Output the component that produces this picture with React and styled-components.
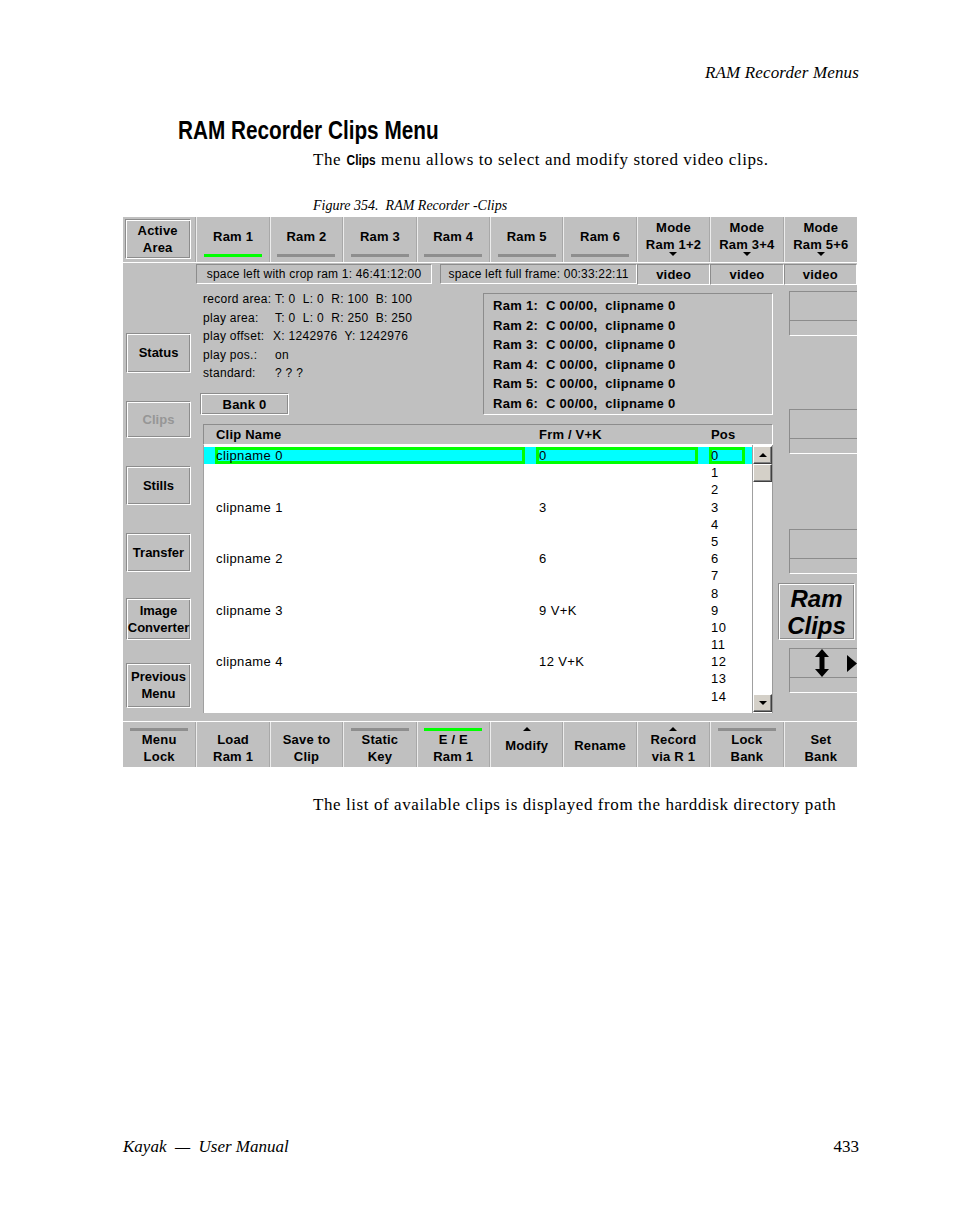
import React from 'react';
import styled, { createGlobalStyle } from 'styled-components';

const GlobalStyle = createGlobalStyle`
    html, body {
        margin: 0;
        padding: 0;
        background: #ffffff;
    }
    body {
        font-family: "Liberation Serif", "DejaVu Serif", serif;
        color: #000;
    }
`;

const GREY = '#c0c0c0';
const DARK = '#8c8c8c';
const GREEN = '#00ff00';
const CYAN = '#00ffff';

// page (manual) parts
const Page = styled.div`
    width: 954px;
    height: 1227px;
    box-sizing: border-box;
    padding: 63px 96px 70px 123px;
    display: flex;
    flex-direction: column;
`;

const RunningHead = styled.div`
    font-style: italic;
    font-size: 17px;
    line-height: 20px;
    letter-spacing: 0.15px;
    text-align: right;
    margin-right: -1px;
`;

// the manual uses a condensed grotesque; squeeze Liberation Sans to get the same width
const Heading = styled.h1`
    margin: 32px 0 0 55px;
    font-family: "Liberation Sans", Arial, sans-serif;
    font-weight: bold;
    font-size: 25px;
    line-height: 30px;
    transform: scaleX(0.83);
    transform-origin: left center;
    white-space: nowrap;
`;

const BodyText = styled.p`
    margin: ${(p) => p.$top}px 0 0 190px;
    font-size: 17px;
    line-height: 20px;
    letter-spacing: 0.58px;
    white-space: nowrap;
`;

const Condensed = styled.b`
    display: inline-block;
    font-family: "Liberation Sans", Arial, sans-serif;
    font-size: 14px;
    letter-spacing: 0;
    transform: scaleX(0.85);
    margin: 0 -2px;
`;

const Caption = styled.div`
    margin: 28px 0 0 190px;
    font-style: italic;
    font-size: 14px;
    line-height: 16px;
`;

const Footer = styled.div`
    margin-top: auto;
    display: flex;
    justify-content: space-between;
    font-style: italic;
    font-size: 17px;
    line-height: 20px;
`;

const PageNumber = styled.span`
    font-style: normal;
    margin-right: -1px;
`;

// the screen grab
const Panel = styled.div`
    margin-top: 3px;
    width: 734px;
    height: 550px;
    background: ${GREY};
    font-family: "Liberation Sans", Arial, sans-serif;
    font-size: 12px;
    color: #000;
    display: flex;
    flex-direction: column;
    overflow: hidden;
`;

const ButtonBar = styled.div`
    display: grid;
    grid-template-columns: repeat(10, 1fr);
    height: 45px;
    border-${(p) => p.$edge}: 1px solid #ffffff;
`;

const BarCell = styled.div`
    display: flex;
    flex-direction: column;
    align-items: center;
    padding-top: ${(p) => p.$top || 0}px;
    border-left: 1px solid #ececec;
    border-right: 1px solid #a8a8a8;
    font-weight: bold;
    font-size: 13px;
    letter-spacing: 0.2px;
    line-height: 17px;
    text-align: center;
    white-space: nowrap;
    &:first-child {
        border-left: none;
    }
    &:last-child {
        border-right: none;
    }
`;

const Groove = styled.div`
    box-sizing: border-box;
    display: flex;
    flex-direction: column;
    align-items: center;
    justify-content: center;
    border: 1px solid;
    border-color: ${DARK} #ffffff #ffffff ${DARK};
    box-shadow: inset 1px 1px 0 #ffffff, inset -1px -1px 0 ${DARK};
    font-weight: bold;
    font-size: 13px;
    line-height: 17px;
    letter-spacing: 0.2px;
    text-align: center;
    white-space: nowrap;
    color: ${(p) => (p.$disabled ? '#969696' : '#000')};
`;

const ActiveButton = styled(Groove)`
    width: 66px;
    height: 40px;
    margin-left: -3px;
`;

const TabLabel = styled.div`
    line-height: 16px;
`;

const Indicator = styled.div`
    width: 58px;
    height: 3px;
    margin-top: ${(p) => p.$gap || 0}px;
    background: ${(p) => p.$color};
`;

const Marker = styled.div`
    height: 4px;
    display: flex;
    align-items: flex-end;
    justify-content: center;
`;

const Tri = styled.span`
    width: 0;
    height: 0;
    border-left: 4px solid transparent;
    border-right: 4px solid transparent;
    ${(p) => (p.$dir === 'up' ? 'border-bottom: 4px solid #000;' : 'border-top: 4px solid #000;')}
`;

const BottomLabel = styled.div`
    margin-top: ${(p) => (p.$single ? 6 : 0)}px;
`;

const InfoStrip = styled.div`
    height: 22px;
    display: flex;
    align-items: center;
    padding-left: 73px;
`;

const Sunken = styled.div`
    box-sizing: border-box;
    height: 20px;
    display: flex;
    align-items: center;
    justify-content: center;
    border: 1px solid;
    border-color: ${DARK} #ffffff #ffffff ${DARK};
    white-space: nowrap;
    letter-spacing: 0.2px;
`;

const SpaceBox = styled(Sunken)`
    flex: 0 0 ${(p) => p.$w}px;
    margin-right: ${(p) => p.$gap || 0}px;
`;

const VideoBox = styled(Sunken)`
    flex: 1;
    height: 21px;
    font-weight: bold;
    font-size: 13px;
`;

const Middle = styled.div`
    height: 436px;
    display: grid;
    grid-template-columns: 72px 580px 82px;
`;

const LeftColumn = styled.div`
    padding-top: 34.5px;
    display: flex;
    flex-direction: column;
`;

const SideCell = styled.div`
    height: 66.5px;
    display: flex;
    align-items: center;
    padding-left: 3px;
`;

const SideButton = styled(Groove)`
    width: 65px;
    height: ${(p) => p.$h}px;
    letter-spacing: 0;
`;

const Content = styled.div`
    display: flex;
    flex-direction: column;
    padding-left: 8px;
`;

const InfoBlock = styled.div`
    height: 135px;
    display: flex;
`;

const InfoLeft = styled.div`
    flex: 1;
    padding-top: 5px;
`;

const InfoRow = styled.div`
    display: flex;
    line-height: 18.5px;
    letter-spacing: 0.3px;
    white-space: pre;
`;

const InfoLabel = styled.span`
    width: ${(p) => p.$w || 72}px;
`;

const BankButton = styled(Groove)`
    width: 89px;
    height: 22px;
    margin: 10.5px 0 0 -3px;
`;

const RamBox = styled.div`
    box-sizing: border-box;
    width: 290px;
    height: 122px;
    margin: 8px 2px 0 0;
    padding: 2px 9px;
    border: 1px solid;
    border-color: ${DARK} #ffffff #ffffff ${DARK};
`;

const RamLine = styled.div`
    font-weight: bold;
    font-size: 13px;
    line-height: 19.5px;
    letter-spacing: 0.3px;
    white-space: pre;
`;

const ListGrid = styled.div`
    display: grid;
    grid-template-columns: 310px 162px 36px;
    column-gap: 11px;
    padding-left: 11px;
`;

const ListHeader = styled(ListGrid)`
    box-sizing: border-box;
    width: 570px;
    height: 21px;
    margin-top: 4px;
    align-items: center;
    border: 1px solid;
    border-color: ${DARK} #ffffff #ffffff ${DARK};
    padding-left: 11px;
    font-weight: bold;
    font-size: 13px;
    letter-spacing: 0.2px;
`;

const HeadCell = styled.span`
    padding-left: ${(p) => p.$pad}px;
`;

const ListBody = styled.div`
    box-sizing: border-box;
    width: 570px;
    height: 268px;
    display: flex;
    background: #ffffff;
    border-left: 1px solid #a0a0a0;
`;

const Lines = styled.div`
    flex: 1;
    padding-top: 2px;
`;

const Line = styled(ListGrid)`
    height: 17.2px;
    align-items: center;
    background: ${(p) => (p.$selected ? CYAN : 'transparent')};
    font-size: 13px;
    letter-spacing: 0.4px;
    white-space: nowrap;
`;

const Cell = styled.span`
    height: 17.2px;
    line-height: 17.2px;
    padding-left: ${(p) => p.$pad}px;
    box-shadow: ${(p) => (p.$selected ? `inset 0 0 0 3px ${GREEN}` : 'none')};
`;

const Scrollbar = styled.div`
    width: 19px;
    display: flex;
    flex-direction: column;
    padding: 1px 0;
    border-left: 1px solid #a0a0a0;
    border-right: 1px solid #9a9a9a;
`;

const ScrollButton = styled.div`
    box-sizing: border-box;
    height: 18px;
    display: flex;
    align-items: center;
    justify-content: center;
    background: #d4d0c8;
    border: 1px solid;
    border-color: #ffffff #404040 #404040 #ffffff;
    box-shadow: inset -1px -1px 0 #808080;
`;

const Track = styled.div`
    flex: 1;
`;

const RightColumn = styled.div`
    display: flex;
    flex-direction: column;
`;

const EmptyBox = styled.div`
    box-sizing: border-box;
    width: 68px;
    height: 45px;
    margin: ${(p) => p.$top}px 0 0 14px;
    border-top: 1px solid ${DARK};
    border-left: 1px solid ${DARK};
    border-bottom: 1px solid #ffffff;
    display: flex;
    flex-direction: column;
`;

const BoxTop = styled.div`
    height: 28px;
    border-bottom: 1px solid ${DARK};
    display: flex;
    align-items: center;
    overflow: hidden;
`;

const RamClips = styled(Groove)`
    width: 77px;
    height: 57px;
    margin: 9px 0 0 3px;
    font-style: italic;
    font-size: 24px;
    line-height: 27px;
    letter-spacing: 0;
`;

const UpDown = () => (
    <svg width="14" height="28" viewBox="0 0 14 28" style={{ marginLeft: 25 }}>
        <path d="M7 0 L14 8 L9.5 8 L9.5 20 L14 20 L7 28 L0 20 L4.5 20 L4.5 8 L0 8 Z" fill="#000" />
    </svg>
);

const RightArrow = () => (
    <svg width="10" height="17" viewBox="0 0 10 17" style={{ marginLeft: 18, flexShrink: 0 }}>
        <path d="M0 0 L10 8.5 L0 17 Z" fill="#000" />
    </svg>
);

const clips = ['0', '3', '6', '9 V+K', '12 V+K'];

const ramTabs = ['Ram 1', 'Ram 2', 'Ram 3', 'Ram 4', 'Ram 5', 'Ram 6'];

const bottomButtons = [
    { lines: ['Menu', 'Lock'], marker: 'grey' },
    { lines: ['Load', 'Ram 1'] },
    { lines: ['Save to', 'Clip'] },
    { lines: ['Static', 'Key'], marker: 'grey' },
    { lines: ['E / E', 'Ram 1'], marker: 'green' },
    { lines: ['Modify'], marker: 'up' },
    { lines: ['Rename'] },
    { lines: ['Record', 'via R 1'], marker: 'up' },
    { lines: ['Lock', 'Bank'], marker: 'grey' },
    { lines: ['Set', 'Bank'] },
];

const sideButtons = [
    { lines: ['Status'], h: 40 },
    { lines: ['Clips'], h: 37, disabled: true },
    { lines: ['Stills'], h: 39 },
    { lines: ['Transfer'], h: 39 },
    { lines: ['Image', 'Converter'], h: 42 },
    { lines: ['Previous', 'Menu'], h: 45 },
];

function renderMarker(marker) {
    if (marker === 'grey') return <Indicator $color="#8e8e8e" />;
    if (marker === 'green') return <Indicator $color={GREEN} />;
    if (marker === 'up') return <Tri $dir="up" />;
    return null;
}

export default function App() {
    const lines = Array.from({ length: 15 }, (_, i) => i);
    return (
        <>
            <GlobalStyle />
            <Page>
                <RunningHead>RAM Recorder Menus</RunningHead>
                <Heading>RAM Recorder Clips Menu</Heading>
                <BodyText $top={5}>
                    The <Condensed>Clips</Condensed> menu allows to select and modify stored video clips.
                </BodyText>
                <Caption>Figure 354.&nbsp; RAM Recorder -Clips</Caption>

                <Panel>
                    <ButtonBar $edge="bottom">
                        <BarCell $top={2}>
                            <ActiveButton>
                                <div>Active</div>
                                <div>Area</div>
                            </ActiveButton>
                        </BarCell>
                        {ramTabs.map((tab, i) => (
                            <BarCell key={tab} $top={12}>
                                <TabLabel>{tab}</TabLabel>
                                <Indicator $gap={9} $color={i === 0 ? GREEN : '#8e8e8e'} />
                            </BarCell>
                        ))}
                        {['Ram 1+2', 'Ram 3+4', 'Ram 5+6'].map((m) => (
                            <BarCell key={m} $top={2}>
                                <div>Mode</div>
                                <div>{m}</div>
                                <Tri style={{ marginTop: -1 }} />
                            </BarCell>
                        ))}
                    </ButtonBar>

                    <InfoStrip>
                        <SpaceBox $w={236} $gap={8}>space left with crop ram 1: 46:41:12:00</SpaceBox>
                        <SpaceBox $w={197}>space left full frame: 00:33:22:11</SpaceBox>
                        <VideoBox>video</VideoBox>
                        <VideoBox>video</VideoBox>
                        <VideoBox>video</VideoBox>
                    </InfoStrip>

                    <Middle>
                        <LeftColumn>
                            {sideButtons.map((b) => (
                                <SideCell key={b.lines[0]}>
                                    <SideButton $h={b.h} $disabled={b.disabled}>
                                        {b.lines.map((l) => (
                                            <div key={l}>{l}</div>
                                        ))}
                                    </SideButton>
                                </SideCell>
                            ))}
                        </LeftColumn>

                        <Content>
                            <InfoBlock>
                                <InfoLeft>
                                    <InfoRow>
                                        <InfoLabel>record area:</InfoLabel>
                                        <span>T: 0  L: 0  R: 100  B: 100</span>
                                    </InfoRow>
                                    <InfoRow>
                                        <InfoLabel>play area:</InfoLabel>
                                        <span>T: 0  L: 0  R: 250  B: 250</span>
                                    </InfoRow>
                                    <InfoRow>
                                        <InfoLabel $w={70}>play offset:</InfoLabel>
                                        <span>X: 1242976  Y: 1242976</span>
                                    </InfoRow>
                                    <InfoRow>
                                        <InfoLabel>play pos.:</InfoLabel>
                                        <span>on</span>
                                    </InfoRow>
                                    <InfoRow>
                                        <InfoLabel>standard:</InfoLabel>
                                        <span>? ? ?</span>
                                    </InfoRow>
                                    <BankButton>Bank 0</BankButton>
                                </InfoLeft>
                                <RamBox>
                                    {ramTabs.map((tab) => (
                                        <RamLine key={tab}>{`${tab}:  C 00/00,  clipname 0`}</RamLine>
                                    ))}
                                </RamBox>
                            </InfoBlock>

                            <ListHeader>
                                <HeadCell $pad={1}>Clip Name</HeadCell>
                                <HeadCell $pad={3}>Frm / V+K</HeadCell>
                                <HeadCell $pad={2}>Pos</HeadCell>
                            </ListHeader>

                            <ListBody>
                                <Lines>
                                    {lines.map((i) => {
                                        const clip = i % 3 === 0 && i / 3 < clips.length ? i / 3 : null;
                                        const selected = i === 0;
                                        return (
                                            <Line key={i} $selected={selected}>
                                                <Cell $pad={1} $selected={selected}>
                                                    {clip !== null ? `clipname ${clip}` : ''}
                                                </Cell>
                                                <Cell $pad={3} $selected={selected}>
                                                    {clip !== null ? clips[clip] : ''}
                                                </Cell>
                                                <Cell $pad={2} $selected={selected}>
                                                    {i}
                                                </Cell>
                                            </Line>
                                        );
                                    })}
                                </Lines>
                                <Scrollbar>
                                    <ScrollButton>
                                        <Tri $dir="up" />
                                    </ScrollButton>
                                    <ScrollButton />
                                    <Track />
                                    <ScrollButton>
                                        <Tri />
                                    </ScrollButton>
                                </Scrollbar>
                            </ListBody>
                        </Content>

                        <RightColumn>
                            <EmptyBox $top={6}>
                                <BoxTop />
                            </EmptyBox>
                            <EmptyBox $top={73}>
                                <BoxTop />
                            </EmptyBox>
                            <EmptyBox $top={75}>
                                <BoxTop />
                            </EmptyBox>
                            <RamClips>
                                <div>Ram</div>
                                <div>Clips</div>
                            </RamClips>
                            <EmptyBox $top={8}>
                                <BoxTop>
                                    <UpDown />
                                    <RightArrow />
                                </BoxTop>
                            </EmptyBox>
                        </RightColumn>
                    </Middle>

                    <ButtonBar $edge="top">
                        {bottomButtons.map((b) => (
                            <BarCell key={b.lines.join(' ')} $top={5}>
                                <Marker>{renderMarker(b.marker)}</Marker>
                                {b.lines.map((l) => (
                                    <BottomLabel key={l} $single={b.lines.length === 1}>
                                        {l}
                                    </BottomLabel>
                                ))}
                            </BarCell>
                        ))}
                    </ButtonBar>
                </Panel>

                <BodyText $top={28}>
                    The list of available clips is displayed from the harddisk directory path
                </BodyText>

                <Footer>
                    <span>Kayak&nbsp; —&nbsp; User Manual</span>
                    <PageNumber>433</PageNumber>
                </Footer>
            </Page>
        </>
    );
}
